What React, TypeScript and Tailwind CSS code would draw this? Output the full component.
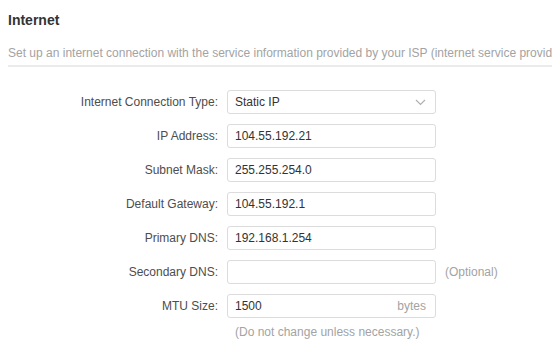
import React from 'react';

const rows = [
  { label: 'IP Address:', value: '104.55.192.21' },
  { label: 'Subnet Mask:', value: '255.255.254.0' },
  { label: 'Default Gateway:', value: '104.55.192.1' },
  { label: 'Primary DNS:', value: '192.168.1.254' },
];

const Label = ({ children }: { children: React.ReactNode }) => (
  <div className="w-[218px] shrink-0 text-right text-[12px] text-[#4d4d4d]">{children}</div>
);

const App = () => {
  return (
    <div className="w-[552px] h-[344px] overflow-hidden bg-white pl-2 font-['Liberation_Sans',Arial,sans-serif]">
      <h1 className="pt-[12px] text-[14px] font-bold text-[#333] leading-[16px]">Internet</h1>
      <p className="mt-[18px] whitespace-nowrap text-[12px] leading-[14px] text-[#a3a3a3]">
        Set up an internet connection with the service information provided by your ISP (internet service provider).
      </p>
      <div className="mt-[5px] h-[2px] bg-[#ebebeb]" />

      <div className="mt-[23px] -ml-2 flex flex-col gap-[10px]">
        <div className="flex items-center">
          <Label>Internet Connection Type:</Label>
          <div className="ml-[9px] flex h-[24px] w-[209px] items-center justify-between rounded-[3px] border border-[#dcdcdc] pl-[7px] pr-[9px] text-[12px] text-[#333]">
            <span>Static IP</span>
            <svg width="11" height="7" viewBox="0 0 11 7" fill="none">
              <path d="M1 1l4.5 4.5L10 1" stroke="#b0b0b0" strokeWidth="1.2" />
            </svg>
          </div>
        </div>
        {rows.map((r) => (
          <div key={r.label} className="flex items-center">
            <Label>{r.label}</Label>
            <div className="ml-[9px] flex h-[24px] w-[209px] items-center rounded-[3px] border border-[#dcdcdc] pl-[7px] text-[12px] text-[#333]">
              {r.value}
            </div>
          </div>
        ))}
        <div className="flex items-center">
          <Label>Secondary DNS:</Label>
          <div className="ml-[9px] h-[24px] w-[209px] rounded-[3px] border border-[#dcdcdc]" />
          <span className="ml-[9px] text-[12px] text-[#a3a3a3]">(Optional)</span>
        </div>
        <div>
          <div className="flex items-center">
            <Label>MTU Size:</Label>
            <div className="ml-[9px] flex h-[24px] w-[209px] items-center justify-between rounded-[3px] border border-[#dcdcdc] pl-[7px] pr-[9px] text-[12px]">
              <span className="text-[#333]">1500</span>
              <span className="text-[#a3a3a3]">bytes</span>
            </div>
          </div>
          <div className="ml-[235px] mt-[5px] text-[12px] text-[#a3a3a3]">(Do not change unless necessary.)</div>
        </div>
      </div>
    </div>
  );
};

export default App;
